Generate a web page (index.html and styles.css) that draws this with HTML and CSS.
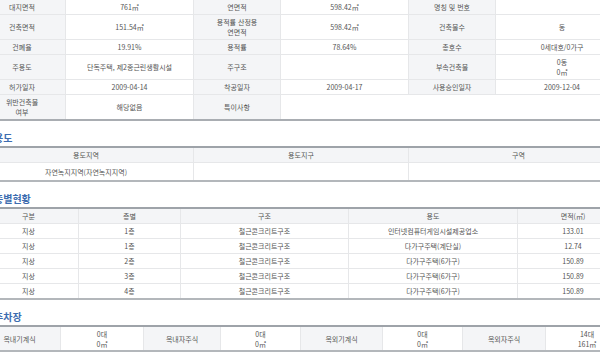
FILE: index.html
```html
<!DOCTYPE html>
<html lang="ko">
<head>
<meta charset="utf-8">
<title>건축물대장</title>
<link rel="stylesheet" href="styles.css">
</head>
<body>
<div class="page">
  <table class="info">
    <colgroup><col style="width:87px"><col style="width:128px"><col style="width:87px"><col style="width:128px"><col style="width:87px"><col style="width:133px"></colgroup>
    <tr><td class="lbl">대지면적</td><td>761㎡</td><td class="lbl">연면적</td><td>598.42㎡</td><td class="lbl">명칭 및 번호</td><td></td></tr>
    <tr><td class="lbl">건축면적</td><td>151.54㎡</td><td class="lbl">용적률 산정용<br>연면적</td><td>598.42㎡</td><td class="lbl">건축물수</td><td>동</td></tr>
    <tr><td class="lbl">건폐율</td><td>19.91%</td><td class="lbl">용적률</td><td>78.64%</td><td class="lbl">총호수</td><td>0세대호/0가구</td></tr>
    <tr><td class="lbl">주용도</td><td>단독주택, 제2종근린생활시설</td><td class="lbl">주구조</td><td></td><td class="lbl">부속건축물</td><td>0동<br>0㎡</td></tr>
    <tr><td class="lbl">허가일자</td><td>2009-04-14</td><td class="lbl">착공일자</td><td>2009-04-17</td><td class="lbl">사용승인일자</td><td>2009-12-04</td></tr>
    <tr class="last"><td class="lbl">위반건축물<br>여부</td><td>해당없음</td><td class="lbl">특이사항</td><td colspan="3"></td></tr>
  </table>

  <h2 class="h">용도</h2>
  <table class="sub zone">
    <colgroup><col style="width:215px"><col style="width:215px"><col style="width:220px"></colgroup>
    <tr><th>용도지역</th><th>용도지구</th><th>구역</th></tr>
    <tr><td>자연녹지지역(자연녹지지역)</td><td></td><td></td></tr>
  </table>

  <h2 class="h">층별현황</h2>
  <table class="sub floors">
    <colgroup><col style="width:100px"><col style="width:102px"><col style="width:168px"><col style="width:169px"><col style="width:111px"></colgroup>
    <tr><th>구분</th><th>층별</th><th>구조</th><th>용도</th><th>면적(㎡)</th></tr>
    <tr><td>지상</td><td>1층</td><td>철근콘크리트구조</td><td>인터넷컴퓨터게임시설제공업소</td><td>133.01</td></tr>
    <tr><td>지상</td><td>1층</td><td>철근콘크리트구조</td><td>다가구주택(계단실)</td><td>12.74</td></tr>
    <tr><td>지상</td><td>2층</td><td>철근콘크리트구조</td><td>다가구주택(6가구)</td><td>150.89</td></tr>
    <tr><td>지상</td><td>3층</td><td>철근콘크리트구조</td><td>다가구주택(6가구)</td><td>150.89</td></tr>
    <tr><td>지상</td><td>4층</td><td>철근콘크리트구조</td><td>다가구주택(6가구)</td><td>150.89</td></tr>
  </table>

  <h2 class="h">주차장</h2>
  <table class="sub park">
    <colgroup><col style="width:82px"><col style="width:83px"><col style="width:77px"><col style="width:80px"><col style="width:82px"><col style="width:80px"><col style="width:83px"><col style="width:83px"></colgroup>
    <tr><td class="lbl">옥내기계식</td><td>0대<br>0㎡</td><td class="lbl">옥내자주식</td><td>0대<br>0㎡</td><td class="lbl">옥외기계식</td><td>0대<br>0㎡</td><td class="lbl">옥외자주식</td><td>14대<br>161㎡</td></tr>
  </table>
</div>
</body>
</html>
```

FILE: styles.css
```css
html, body {
  margin: 0;
  padding: 0;
  overflow: hidden;
  background: #ffffff;
}

body {
  font-family: "Noto Sans CJK KR", "Noto Sans", sans-serif;
  font-size: 7px;
  color: #555555;
}

.page {
  width: 650px;
  margin-left: -22px;
}

table {
  width: 650px;
  border-collapse: collapse;
  table-layout: fixed;
}

td, th {
  padding: 2px 2px;
  line-height: 10px;
  text-align: center;
  vertical-align: middle;
  border: 1px solid #e6e7e9;
  font-weight: normal;
  white-space: nowrap;
  overflow: hidden;
}

.lbl, th {
  background: #f4f5f7;
}

.info tr:first-child td {
  border-top: 0;
}

.info {
  border-bottom: 2px solid #a9adb2;
}

.info tr.last td {
  border-bottom: 2px solid #a9adb2;
}

.h {
  margin: 11px 0 2px;
  padding-left: 16px;
  font-size: 10px;
  line-height: 12px;
  font-weight: bold;
  color: #3d6db0;
}

.sub {
  border-top: 2px solid #9ea3a9;
  border-bottom: 2px solid #b3b7bb;
}

.sub tr:first-child th,
.sub tr:first-child td {
  border-top: 2px solid #9ea3a9;
}

.sub tr:last-child td {
  border-bottom: 2px solid #b3b7bb;
}

.zone td {
  padding: 3.5px 2px;
}

.park td {
  padding: 1.5px 2px;
}
```
